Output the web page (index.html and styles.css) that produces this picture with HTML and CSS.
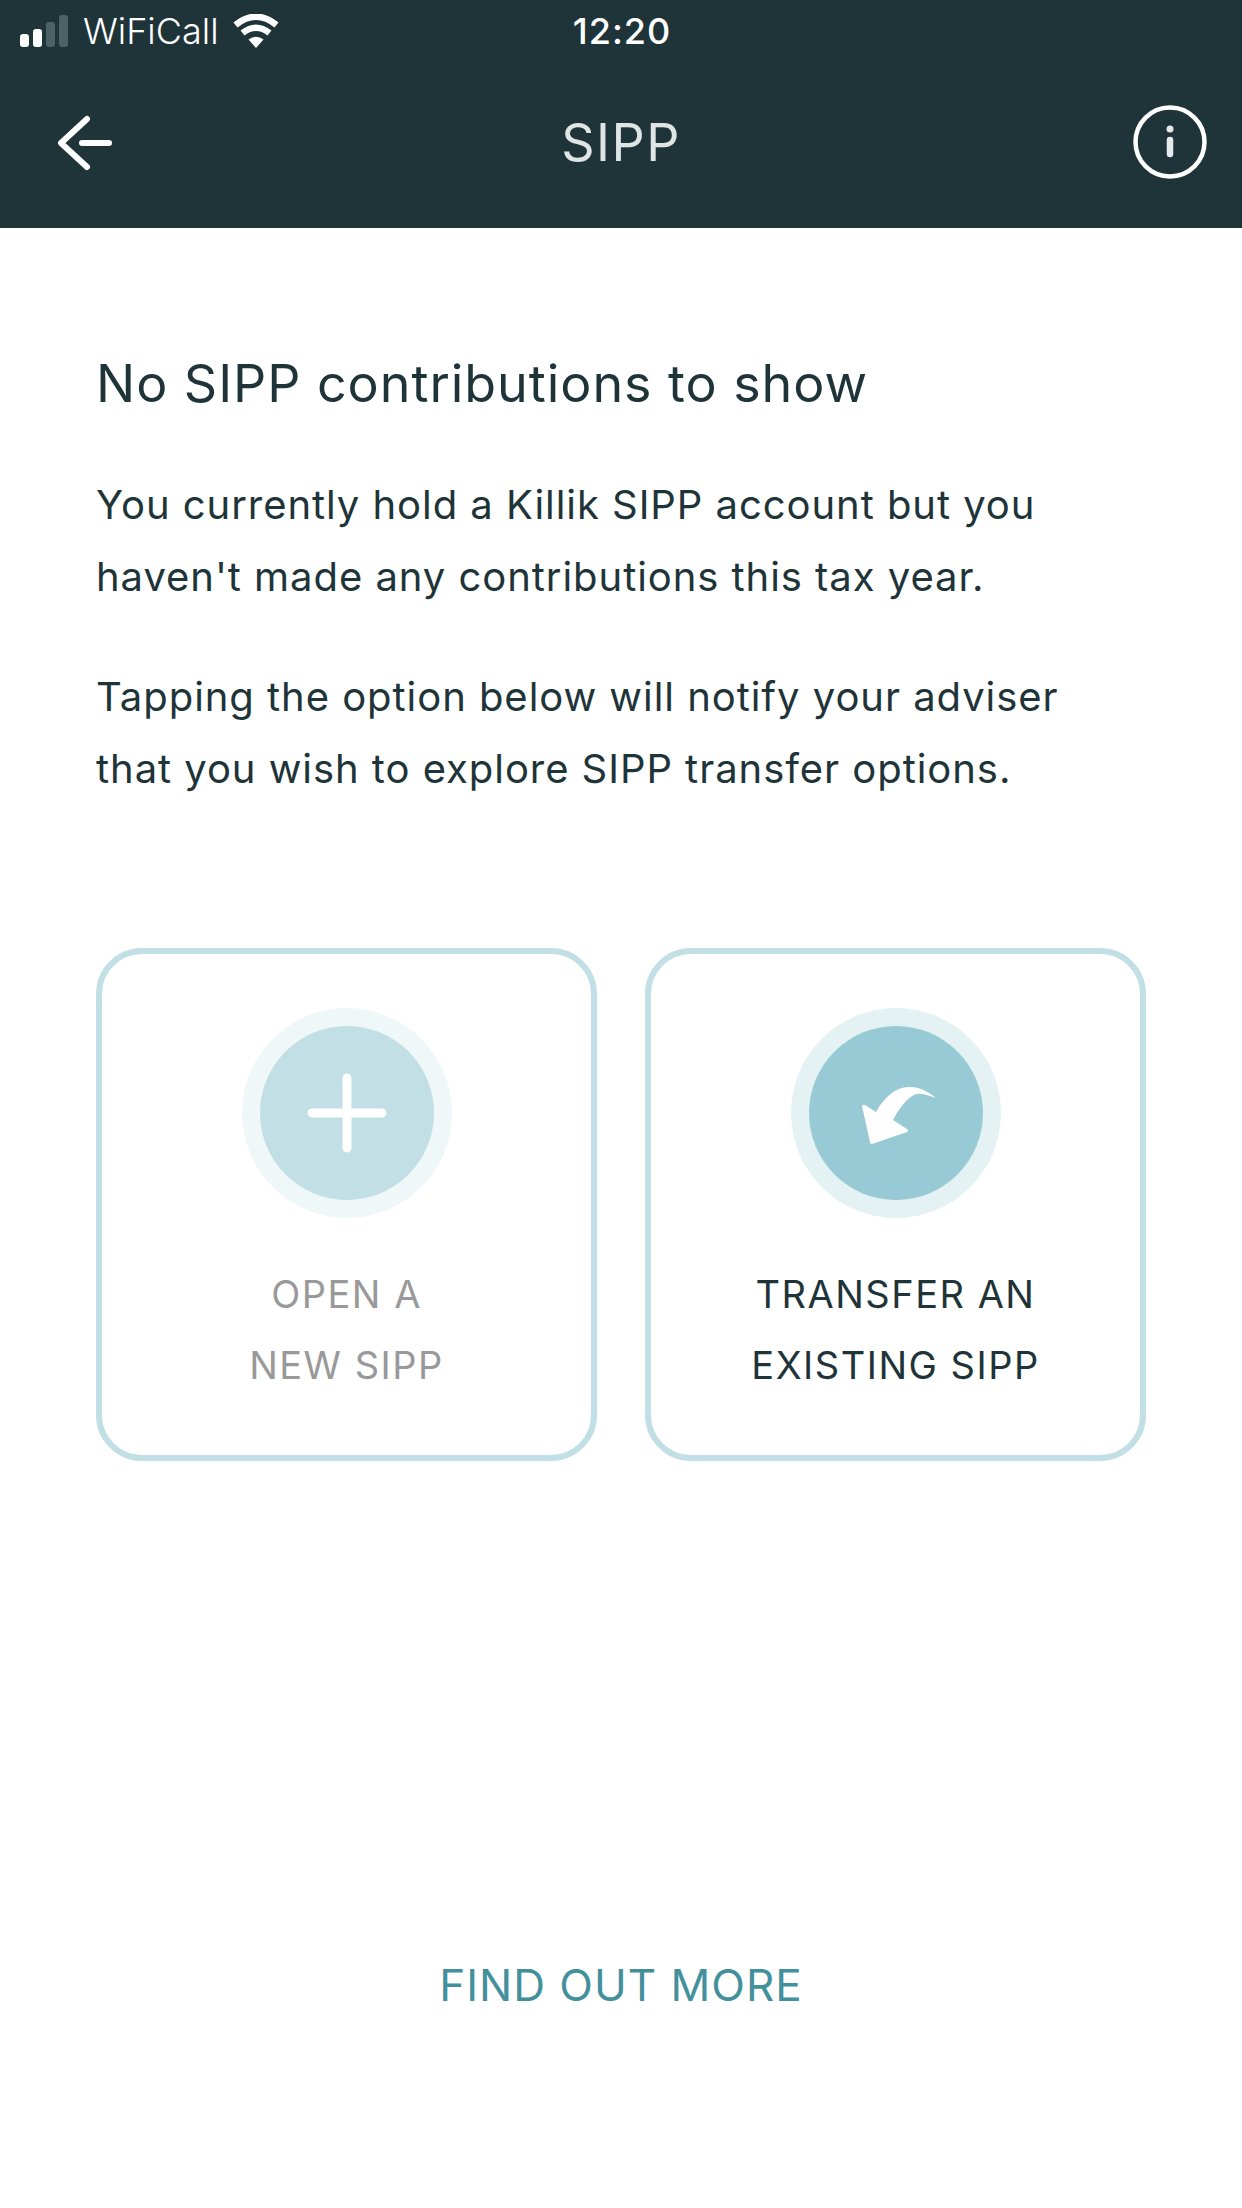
FILE: index.html
```html
<!DOCTYPE html>
<html lang="en">
<head>
  <meta charset="UTF-8">
  <meta name="viewport" content="width=device-width, initial-scale=1.0">
  <title>SIPP</title>
  <link rel="stylesheet" href="styles.css">
</head>
<body>
  <header class="header">
    <div class="status">
      <div class="status-left">
        <div class="signal">
          <span class="bar bar1 on"></span>
          <span class="bar bar2 on"></span>
          <span class="bar bar3"></span>
          <span class="bar bar4"></span>
        </div>
        <span class="carrier">WiFiCall</span>
        <svg class="wifi" viewBox="0 0 46 34" width="46" height="34">
          <path d="M23 34 L15.5 25.5 Q23 20 30.5 25.5 Z" fill="#fff"/>
          <path d="M9.500 19 Q23 8.500 36.500 19" fill="none" stroke="#fff" stroke-width="6.500"/>
          <path d="M2.500 11 Q23 -5.500 43.500 11" fill="none" stroke="#fff" stroke-width="6.500"/>
        </svg>
      </div>
      <div class="time">12:20</div>
      <div></div>
    </div>
    <div class="nav">
      <svg class="back" viewBox="0 0 54 58" width="54" height="58">
        <path d="M29 6 L3 30 L29 54 M24 30 H51" fill="none" stroke="#fff" stroke-width="6" stroke-linecap="round" stroke-linejoin="round"/>
      </svg>
      <div class="title">SIPP</div>
      <svg class="info" viewBox="0 0 74 74" width="74" height="74">
        <circle cx="37" cy="37" r="34.500" fill="none" stroke="#fff" stroke-width="4.500"/>
        <circle cx="37" cy="24" r="3.500" fill="#e6eaeb"/>
        <path d="M37 35 V49" stroke="#e6eaeb" stroke-width="6.500" stroke-linecap="round"/>
      </svg>
    </div>
  </header>

  <main class="content">
    <h1>No SIPP contributions to show</h1>
    <p>You currently hold a Killik SIPP account but you<br>haven't made any contributions this tax year.</p>
    <p>Tapping the option below will notify your adviser<br>that you wish to explore SIPP transfer options.</p>

    <div class="cards">
      <div class="card">
        <div class="ring ring-light">
          <div class="disc disc-light">
            <svg viewBox="0 0 80 80" width="80" height="80">
              <path d="M40 5 V75 M5 40 H75" stroke="#fff" stroke-width="9" stroke-linecap="round"/>
            </svg>
          </div>
        </div>
        <div class="label label-muted">OPEN A<br>NEW SIPP</div>
      </div>
      <div class="card">
        <div class="ring ring-strong">
          <div class="disc disc-strong">
            <svg viewBox="0 0 174 174" width="174" height="174">
              <path d="M53 80 Q54 78 56 79 L67 86 C76 70 88 61 99 61 C110 60 120 66 127 72 C120 70 114 67 108 68 C101 69 92 79 84 94 L98 103 Q100 105 98 106 L63 118 Q61 118 61 116 Z" fill="#fff"/>
            </svg>
          </div>
        </div>
        <div class="label">TRANSFER AN<br>EXISTING SIPP</div>
      </div>
    </div>

    <div class="more">FIND OUT MORE</div>
  </main>
</body>
</html>
```

FILE: styles.css
```css
body {
  margin: 0;
  background: #fff;
  font-family: Inter, "Liberation Sans", sans-serif;
  color: #1e3439;
}
.header {
  height: 228px;
  background: #1e3439;
  color: #fff;
}
.status {
  display: grid;
  grid-template-columns: 1fr auto 1fr;
  align-items: center;
  height: 62px;
  padding: 0 20px;
}
.status-left {
  display: flex;
  align-items: center;
}
.signal {
  display: flex;
  align-items: flex-end;
  gap: 4px;
  height: 32px;
}
.bar {
  width: 9px;
  border-radius: 3px;
  background: #4d6266;
}
.bar.on { background: #fff; }
.bar1 { height: 13px; }
.bar2 { height: 18px; }
.bar3 { height: 25px; }
.bar4 { height: 32px; }
.carrier {
  margin-left: 15px;
  font-size: 36px;
  font-weight: 300;
}
.wifi { margin-left: 14px; }
.time {
  font-size: 36px;
  font-weight: 500;
  letter-spacing: 1px;
  margin-left: 2px;
}
.nav {
  display: grid;
  grid-template-columns: 1fr auto 1fr;
  align-items: center;
  height: 168px;
  margin-top: -4px;
}
.back {
  justify-self: start;
  margin-left: 58px;
}
.title {
  font-size: 52px;
  letter-spacing: 1.5px;
  color: #dfe4e5;
}
.info {
  justify-self: end;
  margin-right: 35px;
}
.content { padding: 0 96px; }
h1 {
  margin: 0;
  padding-top: 123px;
  font-size: 52px;
  line-height: 66px;
  font-weight: 400;
  letter-spacing: 0.95px;
}
p {
  margin: 48px 0 0;
  font-size: 40px;
  line-height: 72px;
  letter-spacing: 0.95px;
}
h1 + p { margin-top: 52px; }
.cards {
  display: flex;
  gap: 48px;
  margin-top: 143px;
}
.card {
  display: flex;
  flex-direction: column;
  align-items: center;
  box-sizing: border-box;
  width: 501px;
  height: 513px;
  padding-top: 54px;
  border: 6px solid #c1dfe5;
  border-radius: 46px;
}
.ring {
  display: flex;
  align-items: center;
  justify-content: center;
  width: 210px;
  height: 210px;
  border-radius: 50%;
}
.ring-light { background: #eff7f9; }
.ring-strong { background: #e5f2f4; }
.disc {
  display: flex;
  align-items: center;
  justify-content: center;
  width: 174px;
  height: 174px;
  border-radius: 50%;
}
.disc-light { background: #c1dfe5; }
.disc-strong { background: #98cad5; }
.label {
  margin-top: 41px;
  font-size: 38px;
  line-height: 71px;
  letter-spacing: 1.5px;
  text-align: center;
}
.label-muted { color: #999; }
.more {
  margin-top: 494px;
  font-size: 44px;
  line-height: 60px;
  letter-spacing: 1px;
  text-align: center;
  color: #43909d;
}
```
